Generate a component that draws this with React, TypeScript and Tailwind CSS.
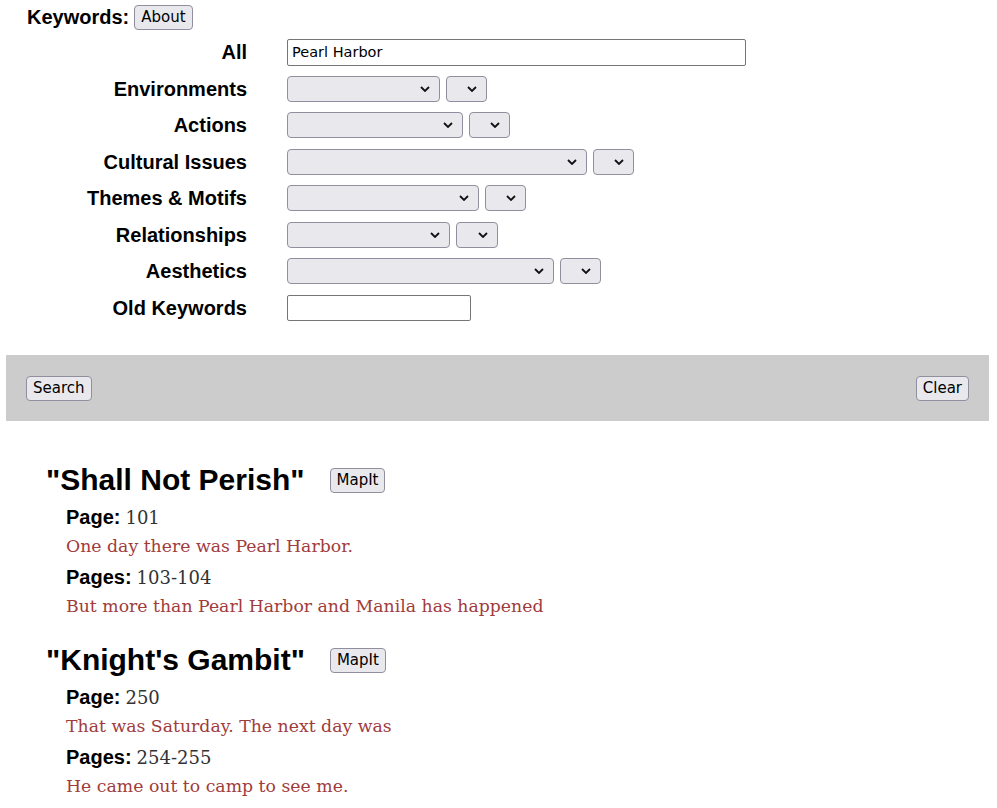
import React from "react";

const rows = [
  { label: "Environments", main: 153, small: 41 },
  { label: "Actions", main: 176, small: 41 },
  { label: "Cultural Issues", main: 300, small: 41 },
  { label: "Themes & Motifs", main: 192, small: 41 },
  { label: "Relationships", main: 163, small: 42 },
  { label: "Aesthetics", main: 267, small: 41 },
];

const results = [
  {
    title: '"Shall Not Perish"',
    hits: [
      { label: "Page:", pages: "101", text: "One day there was Pearl Harbor." },
      { label: "Pages:", pages: "103-104", text: "But more than Pearl Harbor and Manila has happened" },
    ],
  },
  {
    title: '"Knight\'s Gambit"',
    hits: [
      { label: "Page:", pages: "250", text: "That was Saturday. The next day was" },
      { label: "Pages:", pages: "254-255", text: "He came out to camp to see me." },
    ],
  },
];

function Chevron() {
  return (
    <svg width="10" height="6" viewBox="0 0 10 6" className="absolute right-[10px] top-1/2 -translate-y-1/2 pointer-events-none">
      <path d="M1 1l4 4 4-4" fill="none" stroke="#111" strokeWidth="1.8" />
    </svg>
  );
}

function Select({ width }: { width: number }) {
  return (
    <div className="relative h-[26px]" style={{ width }}>
      <select className="appearance-none w-full h-full bg-[#e9e9ed] border border-[#8f8f9d] rounded-[4px]" />
      <Chevron />
    </div>
  );
}

function Btn({ children, className = "" }: { children: React.ReactNode; className?: string }) {
  return (
    <button className={`h-[25px] px-[6px] bg-[#e9e9ed] border border-[#8f8f9d] rounded-[4px] text-black leading-none font-['DejaVu_Sans',sans-serif] ${className}`}>
      {children}
    </button>
  );
}

function Row({ label, children }: { label: string; children: React.ReactNode }) {
  return (
    <div className="flex items-center h-[36.5px]">
      <div className="w-[247px] text-right font-bold text-[20px] leading-none">{label}</div>
      <div className="pl-[40px] flex items-center gap-[6px]">{children}</div>
    </div>
  );
}

export default function App() {
  return (
    <div className="w-[997px] min-h-[808px] bg-white text-black font-['Liberation_Sans',Arial,sans-serif]">
      <div className="pt-[4px] pl-[27px] flex items-center gap-[5px] h-[30px]">
        <span className="font-bold text-[20px] leading-none">Keywords:</span>
        <Btn className="h-[24px] text-[15px]">About</Btn>
      </div>

      <div className="mt-[4px]">
        <Row label="All">
          <input
            defaultValue="Pearl Harbor"
            className="w-[459px] h-[27px] px-[4px] border border-[#767676] rounded-[2px] text-[14.5px] font-['DejaVu_Sans',sans-serif]"
          />
        </Row>
        {rows.map((r) => (
          <Row key={r.label} label={r.label}>
            <Select width={r.main} />
            <Select width={r.small} />
          </Row>
        ))}
        <Row label="Old Keywords">
          <input className="w-[184px] h-[26px] border border-[#767676] rounded-[2px]" />
        </Row>
      </div>

      <div className="mt-[29px] ml-[6px] w-[983px] h-[66px] bg-[#cccccc] flex items-center justify-between px-[20px]">
        <Btn className="text-[15px]">Search</Btn>
        <Btn className="text-[15px]">Clear</Btn>
      </div>

      <div className="mt-[39px] pl-[46px]">
        {results.map((r, i) => (
          <div key={r.title} className={i > 0 ? "mt-[18px]" : ""}>
            <div className="flex items-center h-[40px] gap-[25px]">
              <h2 className="font-bold text-[30px] leading-none">{r.title}</h2>
              <Btn className="text-[15px]">MapIt</Btn>
            </div>
            <div className="mt-[2px] pl-[20px]">
              {r.hits.map((h) => (
                <div key={h.pages}>
                  <div className="h-[30px] flex items-center gap-[5px]">
                    <span className="font-bold text-[20px]">{h.label}</span>
                    <span className="text-[18px] text-[#333] font-['DejaVu_Serif',serif]">{h.pages}</span>
                  </div>
                  <div className="h-[30px] flex items-center text-[17.3px] text-[#a03c3c] font-['DejaVu_Serif',serif]">
                    {h.text}
                  </div>
                </div>
              ))}
            </div>
          </div>
        ))}
      </div>
    </div>
  );
}
